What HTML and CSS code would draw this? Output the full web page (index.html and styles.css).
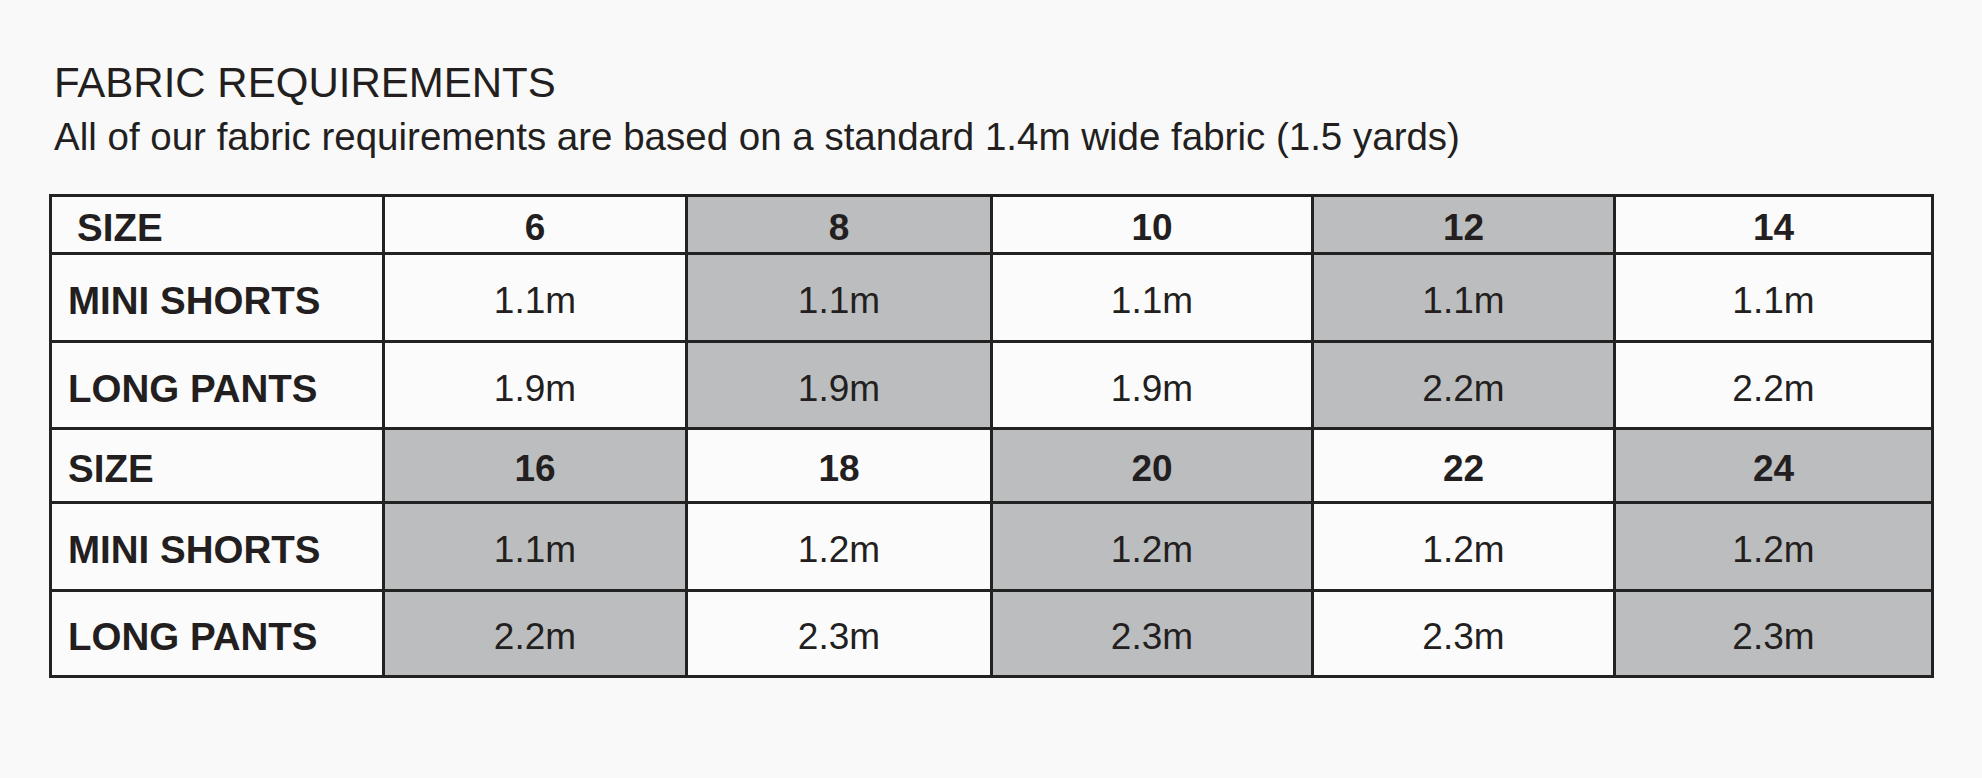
FILE: index.html
```html
<!DOCTYPE html>
<html lang="en">
<head>
<meta charset="utf-8">
<title>Fabric Requirements</title>
<link rel="stylesheet" href="styles.css">
</head>
<body>
<main class="page">
  <h1 class="title">FABRIC REQUIREMENTS</h1>
  <p class="subtitle">All of our fabric requirements are based on a standard 1.4m wide fabric (1.5 yards)</p>
  <div class="chart">
    <div class="cell label label-first head">SIZE</div>
    <div class="cell head">6</div>
    <div class="cell head shade">8</div>
    <div class="cell head">10</div>
    <div class="cell head shade">12</div>
    <div class="cell head">14</div>

    <div class="cell label head">MINI SHORTS</div>
    <div class="cell">1.1m</div>
    <div class="cell shade">1.1m</div>
    <div class="cell">1.1m</div>
    <div class="cell shade">1.1m</div>
    <div class="cell">1.1m</div>

    <div class="cell label head">LONG PANTS</div>
    <div class="cell">1.9m</div>
    <div class="cell shade">1.9m</div>
    <div class="cell">1.9m</div>
    <div class="cell shade">2.2m</div>
    <div class="cell">2.2m</div>

    <div class="cell label head">SIZE</div>
    <div class="cell head shade">16</div>
    <div class="cell head">18</div>
    <div class="cell head shade">20</div>
    <div class="cell head">22</div>
    <div class="cell head shade">24</div>

    <div class="cell label head">MINI SHORTS</div>
    <div class="cell shade">1.1m</div>
    <div class="cell">1.2m</div>
    <div class="cell shade">1.2m</div>
    <div class="cell">1.2m</div>
    <div class="cell shade">1.2m</div>

    <div class="cell label head">LONG PANTS</div>
    <div class="cell shade">2.2m</div>
    <div class="cell">2.3m</div>
    <div class="cell shade">2.3m</div>
    <div class="cell">2.3m</div>
    <div class="cell shade">2.3m</div>
  </div>
</main>
</body>
</html>
```

FILE: styles.css
```css
html, body {
  margin: 0;
  padding: 0;
  background: #f9f9f9;
}

body {
  font-family: "Liberation Sans", Arial, sans-serif;
  color: #231f20;
}

.page {
  padding: 59px 0 0 49px;
}

.title {
  margin: 0 0 8px 5px;
  font-size: 42px;
  line-height: 48px;
  font-weight: 400;
}

.subtitle {
  margin: 0 0 35px 5px;
  font-size: 38.5px;
  line-height: 44px;
}

.chart {
  display: grid;
  grid-template-columns: 330px 300px 302px 318px 299px 315px;
  grid-template-rows: 55px 85px 84px 71px 85px 83px;
  gap: 3px;
  padding: 3px;
  width: max-content;
  background: #222;
}

.cell {
  display: flex;
  align-items: center;
  justify-content: center;
  padding-top: 7px;
  background: #fbfbfb;
  font-size: 37px;
}

.shade {
  background: #bcbdbf;
}

.head {
  font-weight: 700;
}

.label {
  justify-content: flex-start;
  padding-left: 16px;
  font-size: 38.5px;
}

.label-first {
  padding-left: 25px;
}
```
